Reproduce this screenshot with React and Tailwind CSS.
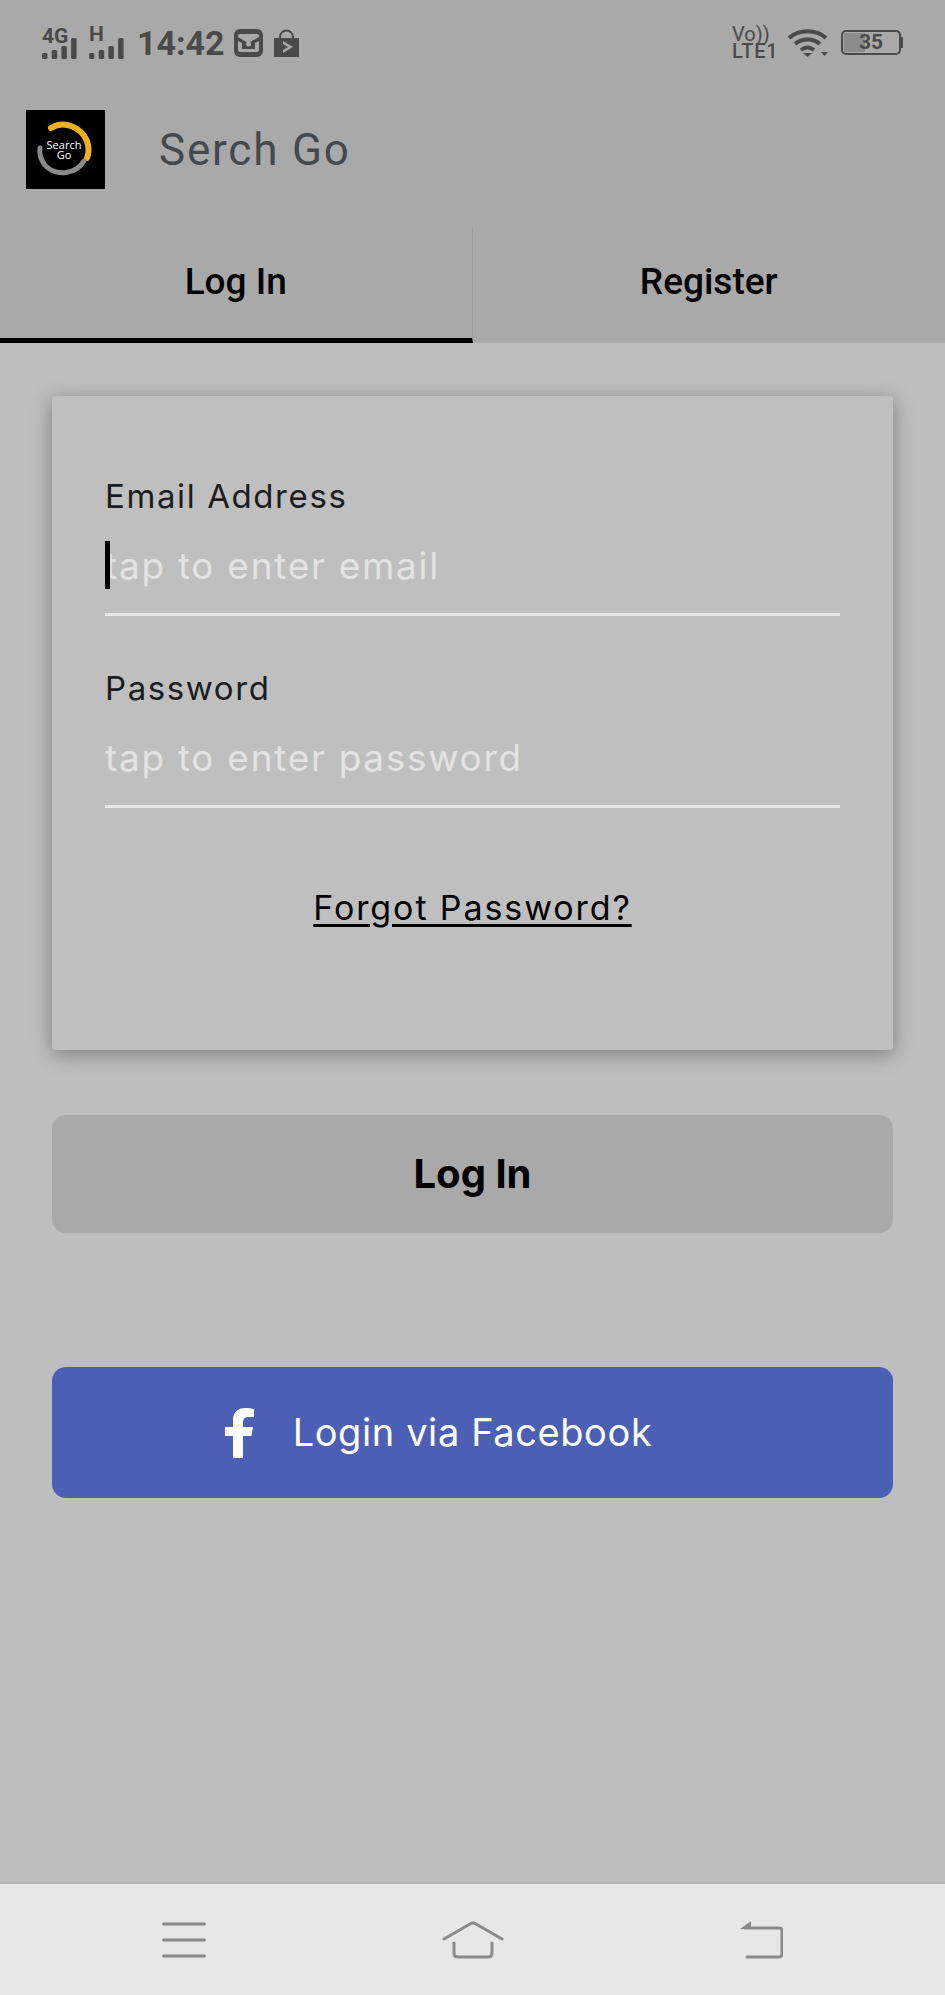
import React from "react";

const karla = { fontFamily: 'Inter, "Noto Sans", sans-serif' };

const SignalBars = ({ heights }) => (
  <svg width="38" height="22" viewBox="0 0 38 22" fill="#4a4a4a">
    {heights.map((h, i) => (
      <rect key={i} x={i * 9.7} y={22 - h} width="5.5" height={h} rx="1.5" />
    ))}
  </svg>
);

const StatusBar = () => (
  <div className="flex h-[85px] items-center justify-between px-[42px] text-[#4a4a4a]">
    <div className="flex items-center">
      <div className="relative h-[32px] w-[38px]">
        <span className="absolute left-0 top-[-6px] font-['Roboto',sans-serif] text-[21px] font-bold">4G</span>
        <div className="absolute bottom-0 left-0"><SignalBars heights={[6, 9, 13, 21]} /></div>
      </div>
      <div className="relative ml-[9px] h-[32px] w-[38px]">
        <span className="absolute left-0 top-[-8px] font-['Roboto',sans-serif] text-[21px] font-bold">H</span>
        <div className="absolute bottom-0 left-0"><SignalBars heights={[6, 9, 13, 21]} /></div>
      </div>
      <span className="ml-[10px] font-['Roboto',sans-serif] text-[34px] leading-none font-bold">14:42</span>
      <svg className="ml-[9px]" width="29" height="28" viewBox="0 0 29 28">
        <rect width="29" height="28" rx="6" fill="#4a4a4a" />
        <rect x="4" y="5" width="21" height="18" rx="2" fill="#a9a9a9" />
        <path d="M4 8l10 6 11-6v4l-4 2v6H8v-6l-4-2z" fill="#4a4a4a" />
        <circle cx="14.500" cy="15" r="2.500" fill="#a9a9a9" />
      </svg>
      <svg className="ml-[11px]" width="25" height="28" viewBox="0 0 25 28">
        <path d="M6 10V8a6.500 6.500 0 0 1 13 0v2" fill="none" stroke="#4a4a4a" strokeWidth="2" />
        <path d="M0 9h25v19H0z" fill="#4a4a4a" />
        <path d="M9 12l10 6-10 6z" fill="#a9a9a9" />
        <path d="M9 15l5 3-5 3z" fill="#4a4a4a" />
      </svg>
    </div>
    <div className="flex items-center">
      <div className="flex w-[46px] flex-col font-['Roboto',sans-serif] leading-none">
        <span className="block text-[20px] leading-[18px]">Vo))</span>
        <span className="block text-[20px] leading-[17px] font-medium tracking-[0.8px]">LTE1</span>
      </div>
      <svg className="ml-[10px]" width="41" height="28" viewBox="0 0 41 28" fill="none" stroke="#4a4a4a" strokeWidth="4">
        <path d="M1 9c10-9 27-9 37 0" />
        <path d="M7 15c7-6 18-6 25 0" />
        <path d="M13 21c4-3 9-3 13 0" />
        <path d="M15 24h9l-4.500 4z" fill="#4a4a4a" stroke="none" />
        <path d="M33 23h7l-3.500 4z" fill="#4a4a4a" stroke="none" />
      </svg>
      <div className="relative ml-[12px] flex h-[25px] w-[60px] items-center justify-center overflow-hidden rounded-[5px] border-2 border-[#4a4a4a] font-['Roboto',sans-serif] text-[21px] font-bold">
        <div className="absolute inset-y-[1px] left-[1px] w-[21px] bg-[#8c8c8c]" />
        <span className="relative">35</span>
      </div>
      <div className="h-[11px] w-[2px] bg-[#4a4a4a]" />
    </div>
  </div>
);

const Logo = () => (
  <div className="relative flex h-[79px] w-[79px] items-center justify-center bg-black">
    <svg className="absolute inset-0" width="79" height="79" viewBox="0 0 79 79" fill="none">
      <path d="M25 18c13-8 30-1 36 13 2 6 2 12 0 17" stroke="#eeb122" strokeWidth="6" strokeLinecap="round" />
      <path d="M58 51c-8 14-30 16-40 3-3-5-5-10-4-16" stroke="#8a8a8a" strokeWidth="5" strokeLinecap="round" strokeDasharray="10 1" />
    </svg>
    <div className="relative mr-[3px] text-center font-['Open_Sans',sans-serif] text-[11px] font-medium text-white">
      <div className="leading-[10px]">Search</div>
      <div className="leading-[10px]">Go</div>
    </div>
  </div>
);

const Tab = ({ label, active, divider }) => (
  <div className={`flex h-full w-1/2 items-center justify-center border-b-[5px] pb-[3px] ${active ? "border-b-black" : "border-b-transparent"} ${divider ? "border-r border-r-[#9c9c9c]" : ""}`}>
    <span className="font-['Roboto',sans-serif] text-[37px] font-medium text-black">{label}</span>
  </div>
);

const Field = ({ label, placeholder, type, caret }) => (
  <div className="relative border-b-[3px] border-[#e8e8e8]">
    <label className="block text-[33px] leading-[44px] tracking-[1.6px] text-[#1b1d20]" style={karla}>{label}</label>
    <input
      type={type}
      placeholder={placeholder}
      className="mt-[19px] mb-[20px] block h-[56px] w-full bg-transparent text-[37px] tracking-[1.7px] outline-none placeholder:text-[#e3e3e3]"
      style={karla}
    />
    {caret && <div className="absolute left-0 top-[67px] h-[48px] w-[5px] bg-black" />}
  </div>
);

const NavIcons = () => (
  <div className="flex h-[111px] items-center bg-[#e7e7e7]">
    <div className="flex w-full items-center justify-between px-[162px]">
      <svg width="44" height="36" viewBox="0 0 44 36" stroke="#8a8a8a" strokeWidth="3" strokeLinecap="round">
        <path d="M1.500 2h41M1.500 18h41M1.500 34h41" />
      </svg>
      <svg width="62" height="38" viewBox="0 0 62 38" fill="none" stroke="#8a8a8a" strokeWidth="3" strokeLinecap="round" strokeLinejoin="round">
        <path d="M2 18L28 3q3-2 6 0l26 15" />
        <path d="M12 22v10q0 4 4 4h30q4 0 4-4V22" />
      </svg>
      <svg width="44" height="38" viewBox="0 0 44 38" fill="none" stroke="#8a8a8a" strokeWidth="3" strokeLinecap="round" strokeLinejoin="round">
        <path d="M8 36h32q3 0 3-3V10q0-3-3-3H6" />
        <path d="M1 8L12 0v8z" fill="#8a8a8a" stroke="none" />
      </svg>
    </div>
  </div>
);

const App = () => {
  return (
    <div className="flex h-[1995px] w-[945px] flex-col overflow-hidden bg-[#bebebe]">
      <header className="h-[343px] shrink-0 bg-[#a9a9a9]">
        <StatusBar />
        <div className="flex h-[143px] items-center pb-[14px] pl-[26px]">
          <Logo />
          <span className="ml-[54px] font-['Roboto',sans-serif] text-[44px] tracking-[1.8px] text-[#45484d]">Serch Go</span>
        </div>
        <div className="flex h-[115px]">
          <Tab label="Log In" active divider />
          <Tab label="Register" />
        </div>
      </header>

      <main className="flex flex-1 flex-col px-[52px] pt-[53px]">
        {/* Login card */}
        <div className="h-[654px] rounded-[3px] bg-[#bfbfbf] px-[53px] pt-[78px] shadow-[0_4px_20px_rgba(0,0,0,0.35)]">
          <Field label="Email Address" placeholder="tap to enter email" type="email" caret />
          <div className="mt-[50px]">
            <Field label="Password" placeholder="tap to enter password" type="password" />
          </div>
          <div className="mt-[74px] text-center">
            <a className="text-[34px] tracking-[1.9px] text-black underline underline-offset-4" style={karla}>Forgot Password?</a>
          </div>
        </div>

        <button className="mt-[65px] h-[118px] rounded-[14px] bg-[#a9a9a9] text-[40px] font-bold text-black" style={karla}>
          Log In
        </button>

        <button className="relative mt-[134px] flex h-[131px] items-center justify-center rounded-[14px] bg-[#4b60b4] text-[38px] tracking-[0.6px] text-white" style={karla}>
          <svg className="absolute left-[172px]" width="32" height="50" viewBox="0 0 32 50" fill="white">
            <path d="M9 50V28H1v-9h8v-7C9 4 14 0 21 0c3 0 7 .5 9 1v8h-5c-4 0-6 2-6 5v5h10l-1.500 9H19v22z" />
          </svg>
          <span>Login via Facebook</span>
        </button>
      </main>

      <div className="h-[2px] bg-[#b3b3b3]" />
      <NavIcons />
    </div>
  );
};

export default App;
